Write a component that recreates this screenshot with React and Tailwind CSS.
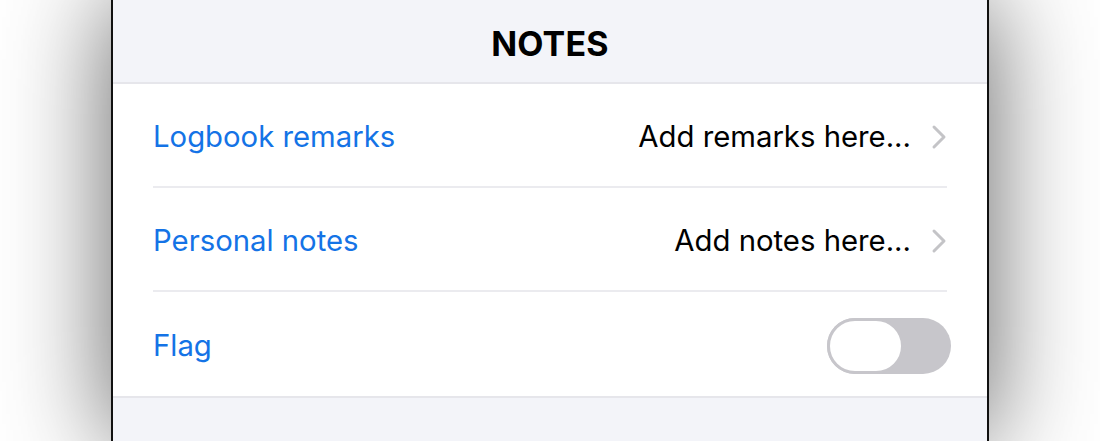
import React, { useState } from 'react';

const rows = [
  { label: 'Logbook remarks', value: 'Add remarks here...' },
  { label: 'Personal notes', value: 'Add notes here...' },
];

function Chevron() {
  return (
    <svg width="16" height="26" viewBox="0 0 16 26" className="shrink-0">
      <path d="M3 3 L13 13 L3 23" fill="none" stroke="#c4c4c7" strokeWidth="3" strokeLinecap="round" strokeLinejoin="round" />
    </svg>
  );
}

function Toggle({ on, onChange }) {
  return (
    <button
      onClick={() => onChange(!on)}
      className="relative -mr-1 h-[56px] w-[124px] shrink-0 rounded-full bg-[#c7c6cb]"
    >
      <span className="absolute left-0 top-0 h-[56px] w-[77px] rounded-full border-[3px] border-[#c7c6cb] bg-white" />
    </button>
  );
}

export default function App() {
  const [flag, setFlag] = useState(false);

  return (
    <div className="h-[441px] overflow-hidden bg-white font-['Inter','Liberation_Sans',sans-serif]">
      <div className="mx-auto flex h-[441px] w-[878px] flex-col border-x-2 border-[#111] bg-[#f3f4f9] shadow-[0_0_100px_rgba(0,0,0,0.62)]">
        {/* Header */}
        <div className="flex h-[82px] shrink-0 items-center justify-center pt-1">
          <h1 className="text-[34px] font-bold tracking-[0.2px] text-black">NOTES</h1>
        </div>

        <div className="border-y-2 border-[#e6e6eb] bg-white">
          <div className="px-10">
            {rows.map((row) => (
              <div key={row.label} className="flex h-[104px] items-center justify-between border-b-2 border-[#ebebef] pt-[3px]">
                <span className="text-[29.3px] text-[#1473e6]">{row.label}</span>
                <div className="flex items-center gap-[20px]">
                  <span className="text-[29.3px] text-black">{row.value}</span>
                  <Chevron />
                </div>
              </div>
            ))}
            <div className="flex h-[104px] items-center justify-between pt-[3px]">
              <span className="text-[29.3px] text-[#1473e6]">Flag</span>
              <Toggle on={flag} onChange={setFlag} />
            </div>
          </div>
        </div>
      </div>
    </div>
  );
}
